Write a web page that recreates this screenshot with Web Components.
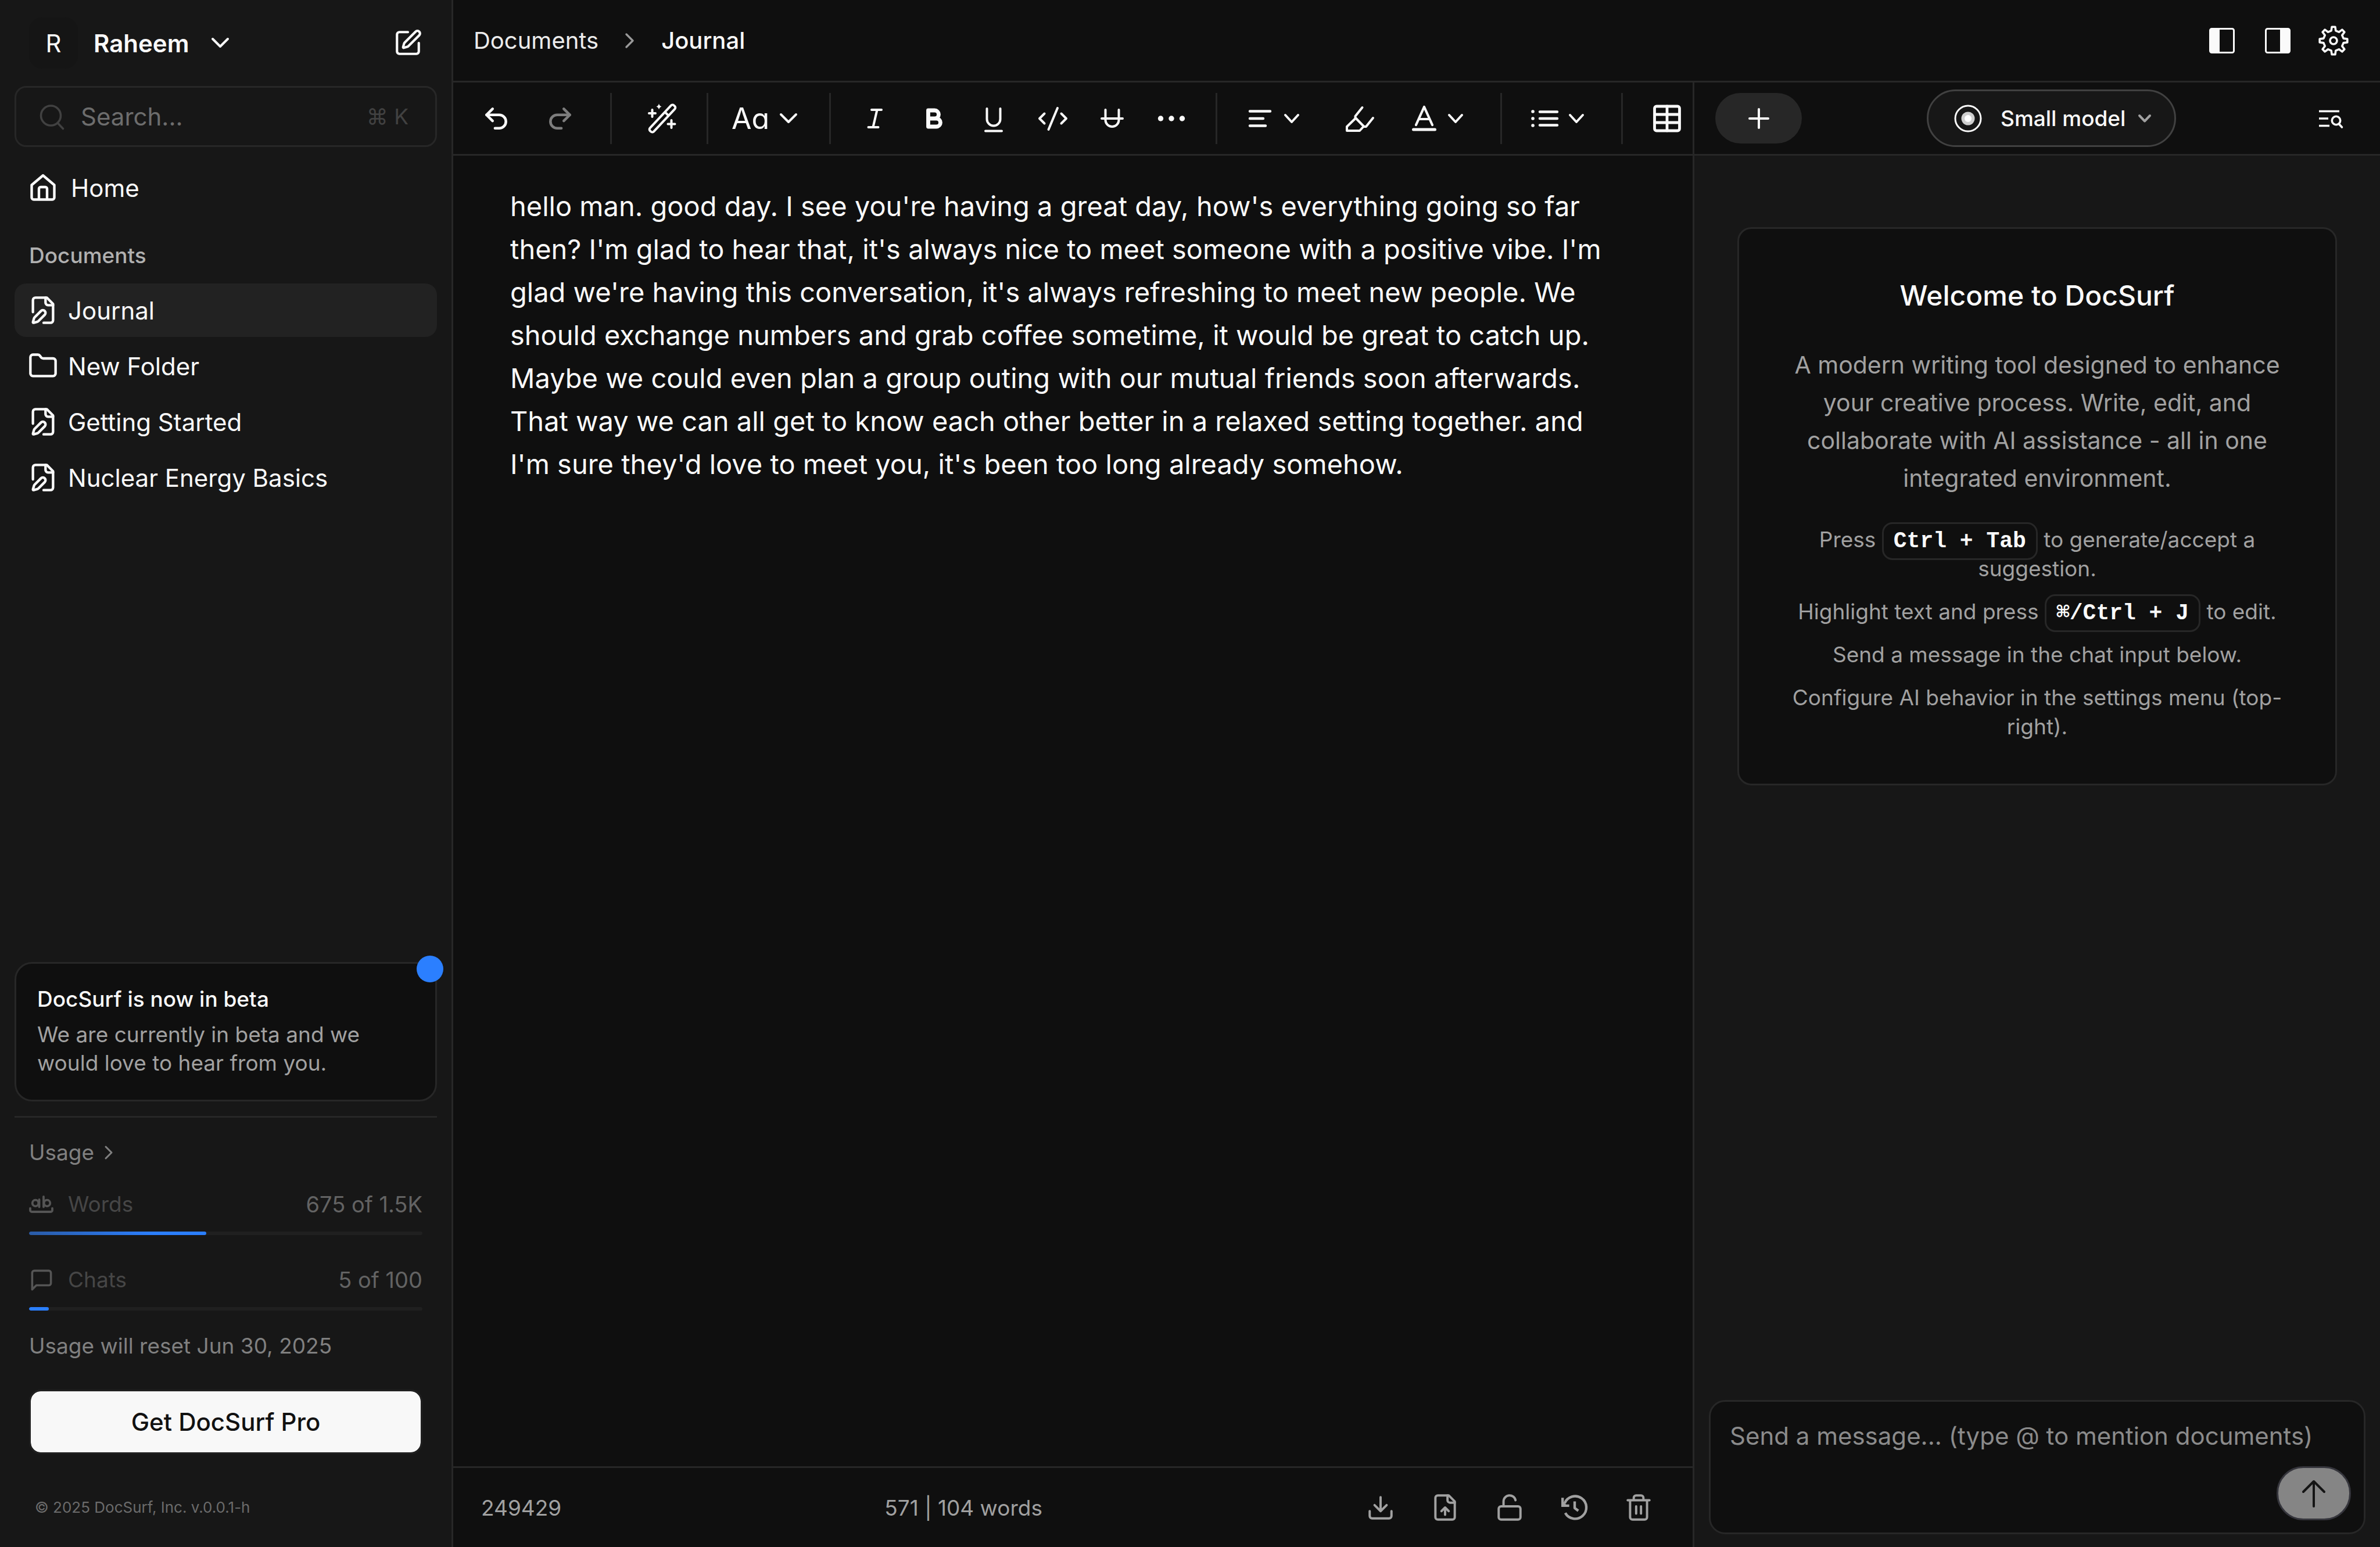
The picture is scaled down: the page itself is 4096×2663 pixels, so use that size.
<!DOCTYPE html>
<html lang="en">
<head>
<meta charset="utf-8">
<title>Journal - DocSurf</title>
<style>
  :root {
    --bg: #0f0f0f;
    --panel: #171717;
    --line: #272727;
    --text: #fafafa;
    --muted: #a1a1a1;
    --blue: #2b7fff;
  }
  html, body { height: 100%; }
  body {
    margin: 0;
    background: var(--bg);
    color: var(--text);
    font-family: Inter, "Liberation Sans", sans-serif;
    font-size: 42px;
  }
</style>
</head>
<body>
<ds-app></ds-app>

<script>
const BASE = `
  *, *::before, *::after { box-sizing: border-box; }
  button, input, textarea, select {
    font: inherit; color: inherit; background: none; border: 0; padding: 0; margin: 0; outline: none;
  }
  a { color: inherit; text-decoration: none; }
  p, h1, h2, ul, li { margin: 0; padding: 0; list-style: none; font-weight: inherit; font-size: inherit; }
`;

class Base extends HTMLElement {
  constructor() {
    super();
    this.attachShadow({ mode: 'open' });
  }
  connectedCallback() {
    this.shadowRoot.innerHTML = `<style>${BASE}${this.css()}</style>${this.html()}`;
  }
  css() { return ''; }
  html() { return ''; }
}

/* Outline of a cog with eight teeth */
function cog() {
  const pts = [];
  for (let i = 0; i < 8; i++) {
    const a = i * 45;
    for (const [d, r] of [[-13, 17.5], [-7, 24], [7, 24], [13, 17.5]]) {
      const t = (a + d - 90) * Math.PI / 180;
      pts.push((26 + r * Math.cos(t)).toFixed(1) + ' ' + (26 + r * Math.sin(t)).toFixed(1));
    }
  }
  return 'M' + pts.join('L') + 'Z';
}

/* name: [viewBox, width, height, stroke width, markup] */
const ICONS = {
  'chevron-down': ['0 0 32 20', 32, 20, 4, '<path d="M3 3l13 13 13-13"/>'],
  'chevron-small': ['0 0 28 18', 28, 18, 4, '<path d="M3 3l11 12 11-12"/>'],
  'chevron-tiny': ['0 0 24 14', 24, 14, 4, '<path d="M3 2l9 9.500 9-9.500"/>'],
  'chevron-right': ['0 0 16 26', 16, 26, 3.5, '<path d="M2 2l11 11-11 11"/>'],
  'chevron-next': ['0 0 14 24', 14, 24, 3, '<path d="M2 2l10 10-10 10"/>'],
  'compose': ['0 0 24 24', 50, 50, 2, '<path d="M12 3H5a2 2 0 0 0-2 2v14a2 2 0 0 0 2 2h14a2 2 0 0 0 2-2v-7"/><path d="M18.375 2.625a1 1 0 0 1 3 3l-9.013 9.014a2 2 0 0 1-.853.505l-2.873.84a.5.5 0 0 1-.62-.62l.84-2.873a2 2 0 0 1 .506-.852z"/>'],
  'search': ['0 0 44 44', 44, 44, 3.6, '<circle cx="19.500" cy="20" r="17"/><path d="M31.500 33l9 9.500"/>'],
  'home': ['0 0 44 48', 44, 48, 4.4, '<path d="M2.500 19.500L22 3l19.500 16.500V41a3.500 3.500 0 0 1-3.500 3.500H6A3.500 3.500 0 0 1 2.500 41z"/><path d="M15 44V26a3 3 0 0 1 3-3h8a3 3 0 0 1 3 3v18"/>'],
  'file-pen': ['0 0 24 24', 52, 52, 2, '<path d="M12.500 22H18a2 2 0 0 0 2-2V7l-5-5H6a2 2 0 0 0-2 2v9.500"/><path d="M14 2v4a2 2 0 0 0 2 2h4"/><path d="M13.378 15.626a1 1 0 1 0-3.004-3.004l-5.010 5.012a2 2 0 0 0-.506.854l-.837 2.870a.5.5 0 0 0 .620.620l2.870-.837a2 2 0 0 0 .854-.506z"/>'],
  'folder': ['0 0 24 24', 52, 52, 2, '<path d="M20 20a2 2 0 0 0 2-2V8a2 2 0 0 0-2-2h-7.900a2 2 0 0 1-1.690-.9L9.600 3.900A2 2 0 0 0 7.930 3H4a2 2 0 0 0-2 2v13a2 2 0 0 0 2 2Z"/>'],
  'words': ['0 0 42 30', 42, 30, 3.8, '<circle cx="11" cy="13" r="5.300"/><path d="M17.500 7v12.500"/><path d="M25 2v17.500"/><circle cx="31" cy="13" r="5.300"/><path d="M2 22v3.500a2.500 2.500 0 0 0 2.500 2.500h33a2.500 2.500 0 0 0 2.500-2.500V22"/>'],
  'chat': ['0 0 24 24', 43, 43, 2, '<path d="M21 15a2 2 0 0 1-2 2H7l-4 4V5a2 2 0 0 1 2-2h14a2 2 0 0 1 2 2z"/>'],
  'panel-left': ['0 0 44 44', 44, 44, 3, '<rect x="1.500" y="1.500" width="41" height="41" rx="3"/><path d="M3 1h15v42H3z" fill="currentColor" stroke="none"/>'],
  'panel-right': ['0 0 44 44', 44, 44, 3, '<rect x="1.500" y="1.500" width="41" height="41" rx="3"/><path d="M26 1h15v42H26z" fill="currentColor" stroke="none"/>'],
  'settings': ['0 0 52 52', 52, 52, 3.6, `<path d="${cog()}"/><circle cx="26" cy="26" r="6"/>`],
  'undo': ['0 0 24 24', 50, 50, 2.2, '<path d="M9 14 4 9l5-5"/><path d="M4 9h10.500a5.500 5.500 0 0 1 0 11H11"/>'],
  'redo': ['0 0 24 24', 50, 50, 2.2, '<path d="m15 14 5-5-5-5"/><path d="M20 9H9.500a5.500 5.500 0 0 0 0 11H13"/>'],
  'wand': ['0 0 52 52', 52, 52, 4, '<g transform="rotate(-47 27 26)"><rect x="-3" y="21.500" width="60" height="9" rx="3.500"/><path d="M38 22v8"/></g><path d="M21 .5q1 4 4.500 5-3.500 1-4.500 5-1-4-4.500-5 3.500-1 4.500-5z" fill="currentColor" stroke="none"/><path d="M9.500 11v12M4 17h11M42.500 29v13M36.500 35.500h12"/>'],
  'italic': ['0 0 52 52', 52, 52, 4, '<path d="M20 11h17M14.500 41h17M29.500 11L22.500 41"/>'],
  'bold': ['0 0 52 52', 52, 52, 6.8, '<path d="M15.500 12h11a7 7 0 0 1 0 14h-11zM15.500 26h14a7 7 0 0 1 0 14h-14z"/>'],
  'underline': ['0 0 52 52', 52, 52, 4, '<path d="M14.500 9v18a11.500 11.500 0 0 0 23 0V9M12 47.500h28"/>'],
  'code': ['0 0 52 52', 52, 52, 4, '<path d="M11.500 17.500L3 26l8.500 8.500M40.500 17.500L49 26l-8.500 8.500M34 8L18.500 45"/>'],
  'strike': ['0 0 52 52', 52, 52, 4, '<path d="M14.500 11v17.500a11.500 11.500 0 0 0 23 0V11M8 26h36"/>'],
  'more': ['0 0 52 52', 52, 52, 0, '<g fill="currentColor"><circle cx="7.500" cy="26" r="4.700"/><circle cx="26" cy="26" r="4.700"/><circle cx="44.500" cy="26" r="4.700"/></g>'],
  'align': ['0 0 52 52', 52, 52, 4.4, '<path d="M8 13.500h35M8 26h23M8 38.500h27"/>'],
  'highlight': ['0 0 52 52', 52, 52, 4, '<path d="M29.500 7L17.500 22v4L3 40v7h22l6.500-7h4.500L48 25M17.500 24.500L32.500 40"/>'],
  'colour': ['0 0 52 52', 52, 52, 4.2, '<path d="M12 37L26 6l14 31M16.500 27h19"/><path d="M7.500 45h37" stroke-width="5"/>'],
  'list': ['0 0 52 52', 52, 52, 4.4, '<path d="M17 14.500h30M17 26h30M17 37.500h30"/><path d="M5 14h.1M5 26h.1M5 38h.1" stroke-width="5.500"/>'],
  'table': ['0 0 52 52', 52, 52, 4.8, '<rect x="4.500" y="5" width="43" height="42" rx="3.500"/><path d="M26 5v42M5 19h42M5 33h42"/>'],
  'plus': ['0 0 36 36', 36, 36, 4, '<path d="M18 2v32M2 18h32"/>'],
  'model': ['0 0 48 48', 48, 48, 3, '<circle cx="24" cy="24" r="22"/><circle cx="24" cy="24" r="11.500" fill="#cfcfcf" stroke="none"/><circle cx="24" cy="24" r="6" fill="#ffffff" stroke="none"/>'],
  'list-search': ['0 0 52 52', 52, 52, 3.6, '<path d="M6 13.500h35M6 26h16M6 38.500h18" stroke-linecap="butt"/><circle cx="35.500" cy="29.500" r="7.200"/><path d="M40.500 35.500l5 5.500"/>'],
  'download': ['0 0 24 24', 50, 50, 1.9, '<path d="M3 15v4a2 2 0 0 0 2 2h14a2 2 0 0 0 2-2v-4"/><path d="m7 10 5 5 5-5M12 15V3.500"/>'],
  'file-up': ['0 0 24 24', 50, 50, 1.9, '<path d="M15 2H6a2 2 0 0 0-2 2v16a2 2 0 0 0 2 2h12a2 2 0 0 0 2-2V7Z"/><path d="M14 2v4a2 2 0 0 0 2 2h4M12 12v6M15 15l-3-3-3 3"/>'],
  'unlock': ['0 0 24 24', 50, 50, 1.9, '<rect x="3" y="11" width="18" height="11" rx="2"/><path d="M7 11V7a5 5 0 0 1 9.900-1"/>'],
  'history': ['0 0 24 24', 50, 50, 2.1, '<path d="M4.700 16.500a9.300 9.300 0 1 0-.5-8" stroke-linecap="butt"/><path d="M2.500 4v6.500H8" stroke-linecap="butt" stroke-linejoin="miter"/><path d="M2.500 10.500V6.500l3.800 4z" fill="currentColor" stroke="none"/><path d="M12.500 7v5.500l3 2.200" stroke-linecap="butt"/>'],
  'trash': ['0 0 24 24', 50, 50, 1.9, '<path d="M3 6h18M19 6v14a2 2 0 0 1-2 2H7a2 2 0 0 1-2-2V6M8 6V4a2 2 0 0 1 2-2h4a2 2 0 0 1 2 2v2M10 11v6M14 11v6"/>'],
  'arrow-up': ['0 0 52 52', 52, 52, 4, '<path d="M26 48V6M8 23L26 5l18 18"/>'],
};

customElements.define('ds-icon', class extends Base {
  css() {
    return `:host { display: inline-flex; flex: none; } svg { display: block; overflow: visible; }`;
  }
  html() {
    const [box, w, h, sw, body] = ICONS[this.getAttribute('name')];
    return `<svg viewBox="${box}" width="${w}" height="${h}" fill="none" stroke="currentColor" stroke-width="${sw}" stroke-linecap="round" stroke-linejoin="round" aria-hidden="true">${body}</svg>`;
  }
});

customElements.define('ds-icon-button', class extends Base {
  css() {
    return `:host { display: inline-flex; flex: none; }
      button { display: flex; align-items: center; justify-content: center; width: 52px; height: 88px; cursor: pointer; }
      :host([menu]) button { width: auto; gap: 14px; padding-right: 20px; }`;
  }
  html() {
    return `<button type="button" aria-label="${this.getAttribute('label')}"><ds-icon name="${this.getAttribute('icon')}"></ds-icon>${this.hasAttribute('menu') ? '<ds-icon name="chevron-small"></ds-icon>' : ''}</button>`;
  }
});

/* ---------- Sidebar ---------- */

customElements.define('ds-nav-item', class extends Base {
  css() {
    return `:host { display: block; }
      a { display: flex; align-items: center; gap: 17px; height: 92px; padding: 0 23px; border-radius: 20px; font-size: 42px; }
      :host([active]) a { background: #222222; }
      .icon { display: flex; width: 52px; justify-content: center; }
      :host([wide]) a { gap: 22px; }`;
  }
  html() {
    return `<a href="#"><span class="icon"><ds-icon name="${this.getAttribute('icon')}"></ds-icon></span><slot></slot></a>`;
  }
});

customElements.define('ds-meter', class extends Base {
  css() {
    return `:host { display: block; font-size: 37px; line-height: 48px; }
      .row { display: flex; align-items: center; margin-bottom: 23px; color: #464646; }
      .icon { display: flex; align-items: center; width: 67px; color: #555555; }
      .value { margin-left: auto; font-size: 38px; color: #636363; }
      progress { display: block; appearance: none; width: 100%; height: 6px; border: 0; border-radius: 3px; overflow: hidden; background: #202020; }
      progress::-webkit-progress-bar { background: #202020; border-radius: 3px; }
      progress::-webkit-progress-value { background: var(--blue); border-radius: 3px; }
      :host([fade]) progress::-webkit-progress-value { background: linear-gradient(90deg, #2a5ba6, #2b7fff 70%); }`;
  }
  html() {
    const a = n => this.getAttribute(n);
    return `<div class="row"><span class="icon"><ds-icon name="${a('icon')}"></ds-icon></span><label for="bar">${a('label')}</label><span class="value">${a('used')} of ${a('limit')}</span></div>
      <progress id="bar" max="${a('max')}" value="${a('used')}"></progress>`;
  }
});

customElements.define('ds-notice', class extends Base {
  css() {
    return `:host { display: block; position: relative; border: 3px solid var(--line); border-radius: 30px; background: var(--bg);
        padding: 36px 36px 39px; font-size: 37px; line-height: 49px; }
      h2 { font-weight: 500; margin-bottom: 12px; }
      p { color: var(--muted); }
      i { position: absolute; top: -14px; right: -14px; width: 46px; height: 46px; border-radius: 50%; background: var(--blue); }`;
  }
  html() {
    return `<h2><slot name="title"></slot></h2><p><slot></slot></p><i></i>`;
  }
});

customElements.define('ds-sidebar', class extends Base {
  css() {
    return `:host { display: flex; flex-direction: column; background: var(--panel); border-right: 3px solid var(--line); padding: 0 25px 50px; }
      header { display: flex; align-items: center; height: 148px; padding: 0 25px; }
      .user { display: flex; align-items: center; font-size: 42px; font-weight: 600; cursor: pointer; }
      .avatar { display: flex; align-items: center; justify-content: center; width: 84px; height: 88px; border-radius: 22px; background: #151515; font-size: 42px; font-weight: 400; margin-right: 27px; }
      .user ds-icon { margin-left: 37px; }
      .compose { display: flex; margin-left: auto; cursor: pointer; }
      .search { display: flex; align-items: center; height: 105px; border: 3px solid var(--line); border-radius: 20px; padding: 0 46px 0 40px; color: #414141; }
      .search input { flex: 1; min-width: 0; margin: 0 26px 0 27px; color: var(--text); font-size: 42px; appearance: none; }
      .search input::placeholder { color: #6d6d6d; opacity: 1; }
      kbd { font: inherit; font-size: 37px; }
      nav { display: flex; flex-direction: column; gap: 4px; }
      .home { margin-top: 24px; }
      h2 { font-size: 37px; line-height: 48px; font-weight: 500; color: #b0b0b0; padding: 47px 25px 24px; }
      .bottom { margin-top: auto; }
      hr { border: 0; height: 3px; background: var(--line); margin: 25px 0 36px; }
      .usage { padding: 0 25px; font-size: 37px; line-height: 48px; color: #808080; }
      .usage > a { display: inline-flex; align-items: center; gap: 18px; }
      .meters { display: flex; flex-direction: column; gap: 53px; margin: 41px 0 37px; }
      .pro { display: block; width: 100%; height: 111px; margin-top: 51px; border: 3px solid #202020; border-radius: 20px; background: #f8f8f8; background-clip: padding-box; color: #111111; font-size: 42px; font-weight: 500; cursor: pointer; }
      small { display: block; margin-top: 74px; padding: 0 35px; font-size: 26px; line-height: 36px; color: #6b6b6b; }`;
  }
  html() {
    return `
      <header>
        <button class="user" type="button"><span class="avatar">R</span>Raheem<ds-icon name="chevron-down"></ds-icon></button>
        <button class="compose" type="button" aria-label="New document"><ds-icon name="compose"></ds-icon></button>
      </header>
      <label class="search"><ds-icon name="search"></ds-icon><input type="search" placeholder="Search..." aria-label="Search"><kbd>⌘ K</kbd></label>
      <nav class="home"><ds-nav-item icon="home" wide>Home</ds-nav-item></nav>
      <h2>Documents</h2>
      <nav>
        <ds-nav-item icon="file-pen" active>Journal</ds-nav-item>
        <ds-nav-item icon="folder">New Folder</ds-nav-item>
        <ds-nav-item icon="file-pen">Getting Started</ds-nav-item>
        <ds-nav-item icon="file-pen">Nuclear Energy Basics</ds-nav-item>
      </nav>
      <div class="bottom">
        <ds-notice><span slot="title">DocSurf is now in beta</span>We are currently in beta and we would love to hear from you.</ds-notice>
        <hr>
        <div class="usage">
          <a href="#">Usage<ds-icon name="chevron-next"></ds-icon></a>
          <div class="meters">
            <ds-meter icon="words" label="Words" used="675" limit="1.5K" max="1500" fade></ds-meter>
            <ds-meter icon="chat" label="Chats" used="5" limit="100" max="100"></ds-meter>
          </div>
          <p>Usage will reset Jun 30, 2025</p>
          <button class="pro" type="button">Get DocSurf Pro</button>
        </div>
        <small>© 2025 DocSurf, Inc. v.0.0.1-h</small>
      </div>`;
  }
});

/* ---------- Top bar ---------- */

customElements.define('ds-topbar', class extends Base {
  css() {
    return `:host { display: flex; align-items: center; justify-content: space-between; height: 142px; padding: 0 54px 0 35px; border-bottom: 3px solid var(--line); font-size: 40px; }
      nav { display: flex; align-items: center; gap: 46px; }
      nav a { color: #ececec; }
      nav ds-icon { color: #999999; }
      strong { font-weight: 500; }
      .tools { display: flex; gap: 44px; }`;
  }
  html() {
    return `<nav aria-label="Breadcrumb"><a href="#">Documents</a><ds-icon name="chevron-right"></ds-icon><strong>Journal</strong></nav>
      <div class="tools">
        <ds-icon-button icon="panel-left" label="Toggle sidebar"></ds-icon-button>
        <ds-icon-button icon="panel-right" label="Toggle chat"></ds-icon-button>
        <ds-icon-button icon="settings" label="Settings"></ds-icon-button>
      </div>`;
  }
});

/* ---------- Editor ---------- */

customElements.define('ds-toolbar', class extends Base {
  css() {
    return `:host { display: flex; align-items: center; height: 126px; border-bottom: 3px solid var(--line); overflow: hidden; }
      .group { display: flex; align-items: center; flex: none; height: 88px; border-right: 3px solid var(--line); }
      .group:last-child { border-right: 0; }
      .history { gap: 58px; padding: 0 60px 0 48px; }
      .history :last-child { color: #7d7d7d; }
      .magic { padding: 0 51px 0 60px; }
      .type { padding: 0 54px 0 40px; }
      .type button { display: flex; align-items: center; gap: 17px; font-size: 50px; line-height: 64px; font-feature-settings: "cv11"; cursor: pointer; }
      .marks { gap: 50px; padding: 0 50px; }
      .para { gap: 58px; padding: 0 43px 0 48px; }
      .insert { padding-left: 50px; }`;
  }
  html() {
    const b = (icon, label, menu = '') => `<ds-icon-button icon="${icon}" label="${label}" ${menu}></ds-icon-button>`;
    return `
      <div class="group history">${b('undo', 'Undo')}${b('redo', 'Redo')}</div>
      <div class="group magic">${b('wand', 'AI edit')}</div>
      <div class="group type"><button type="button">Aa<ds-icon name="chevron-down"></ds-icon></button></div>
      <div class="group marks">${b('italic', 'Italic')}${b('bold', 'Bold')}${b('underline', 'Underline')}${b('code', 'Code')}${b('strike', 'Strikethrough')}${b('more', 'More')}</div>
      <div class="group para">${b('align', 'Align', 'menu')}${b('highlight', 'Highlight')}${b('colour', 'Text colour', 'menu')}</div>
      <div class="group para">${b('list', 'List', 'menu')}</div>
      <div class="group insert">${b('table', 'Table')}</div>`;
  }
});

customElements.define('ds-editor', class extends Base {
  css() {
    return `:host { display: flex; flex-direction: column; min-width: 0; background: var(--bg); }
      article { flex: 1; padding: 50px 132px 50px 98px; font-size: 47px; line-height: 74px; }
      footer { display: flex; align-items: center; justify-content: space-between; height: 139px; border-top: 3px solid var(--line); padding: 0 67px 0 48px; font-size: 37px; color: var(--muted); }
      .actions { display: flex; gap: 59px; }`;
  }
  html() {
    return `<ds-toolbar></ds-toolbar>
      <article><slot></slot></article>
      <footer><span>249429</span><span>571 | 104 words</span>
        <div class="actions">
          <ds-icon-button icon="download" label="Download"></ds-icon-button>
          <ds-icon-button icon="file-up" label="Import file"></ds-icon-button>
          <ds-icon-button icon="unlock" label="Lock document"></ds-icon-button>
          <ds-icon-button icon="history" label="History"></ds-icon-button>
          <ds-icon-button icon="trash" label="Delete"></ds-icon-button>
        </div>
      </footer>`;
  }
});

/* ---------- Chat ---------- */

customElements.define('ds-welcome', class extends Base {
  css() {
    return `:host { display: block; border: 3px solid var(--line); border-radius: 24px; background: var(--bg); padding: 86px 80px 73px; text-align: center; color: var(--muted); }
      h2 { font-size: 48px; line-height: 58px; font-weight: 500; color: var(--text); }
      p { margin-top: 58px; font-size: 41px; line-height: 65px; }
      ul { display: flex; flex-direction: column; gap: 24px; margin-top: 48px; font-size: 37px; line-height: 50px; }
      kbd { font: bold 38px/44px "Liberation Mono", monospace; color: var(--text); border: 3px solid var(--line); border-radius: 18px; padding: 8px 17px; }`;
  }
  html() {
    return `<h2>Welcome to DocSurf</h2>
      <p>A modern writing tool designed to enhance your creative process. Write, edit, and collaborate with AI assistance - all in one integrated environment.</p>
      <ul>
        <li>Press <kbd>Ctrl + Tab</kbd> to generate/accept a <span>suggestion.</span></li>
        <li>Highlight text and press <kbd>⌘/Ctrl + J</kbd> to edit.</li>
        <li>Send a message in the chat input below.</li>
        <li>Configure AI behavior in the settings menu (top-right).</li>
      </ul>`;
  }
});

customElements.define('ds-composer', class extends Base {
  css() {
    return `:host { display: flex; flex-direction: column; border: 3px solid var(--line); border-radius: 28px; background: var(--bg); padding: 33px 22px 21px 33px; }
      textarea { display: block; height: 52px; line-height: 52px; font-size: 42px; resize: none; overflow: hidden; }
      textarea::placeholder { color: #8b8b8b; opacity: 1; }
      button { display: flex; align-items: center; justify-content: center; align-self: flex-end; width: 128px; height: 93px; margin-top: 26px; border: 3px solid #35353c; border-radius: 46px; background: #858585; color: #141414; cursor: pointer; }`;
  }
  html() {
    return `<textarea rows="1" aria-label="Message" placeholder="Send a message... (type @ to mention documents)"></textarea>
      <button type="button" aria-label="Send"><ds-icon name="arrow-up"></ds-icon></button>`;
  }
});

customElements.define('ds-chat', class extends Base {
  css() {
    return `:host { display: flex; flex-direction: column; background: var(--panel); border-left: 3px solid var(--line); }
      header { display: flex; align-items: center; justify-content: space-between; height: 126px; padding: 0 34px 0 36px; background: var(--bg); border-bottom: 3px solid var(--line); }
      .new { display: flex; align-items: center; justify-content: center; width: 149px; height: 87px; border-radius: 44px; background: #272727; cursor: pointer; }
      .model { display: flex; align-items: center; height: 99px; padding: 0 39px 0 44px; border: 3px solid #414141; border-radius: 50px; background: var(--panel); font-size: 37px; font-weight: 500; }
      .model select { appearance: none; margin: 0 20px 0 32px; }
      .model ds-icon:last-child { color: var(--muted); }
      .find { display: flex; justify-content: center; width: 102px; cursor: pointer; }
      ds-welcome { margin: 123px 74px 0; }
      ds-composer { margin: auto 25px 22px; }`;
  }
  html() {
    return `<header>
        <button class="new" type="button" aria-label="New chat"><ds-icon name="plus"></ds-icon></button>
        <label class="model"><ds-icon name="model"></ds-icon><select aria-label="Model"><option>Small model</option></select><ds-icon name="chevron-tiny"></ds-icon></label>
        <button class="find" type="button" aria-label="Chat history"><ds-icon name="list-search"></ds-icon></button>
      </header>
      <ds-welcome></ds-welcome>
      <ds-composer></ds-composer>`;
  }
});

/* ---------- Shell ---------- */

customElements.define('ds-app', class extends Base {
  css() {
    return `:host { display: grid; grid-template-columns: 780px 1fr; height: 100vh; }
      main { display: flex; flex-direction: column; min-width: 0; }
      .work { flex: 1; min-height: 0; display: grid; grid-template-columns: minmax(0, 1fr) 1183px; }`;
  }
  html() {
    return `<ds-sidebar></ds-sidebar>
      <main>
        <ds-topbar></ds-topbar>
        <div class="work">
          <ds-editor><p>hello man. good day. I see you're having a great day, how's everything going so far then? I'm glad to hear that, it's always nice to meet someone with a positive vibe. I'm glad we're having this conversation, it's always refreshing to meet new people. We should exchange numbers and grab coffee sometime, it would be great to catch up. Maybe we could even plan a group outing with our mutual friends soon afterwards. That way we can all get to know each other better in a relaxed setting together. and I'm sure they'd love to meet you, it's been too long already somehow.</p></ds-editor>
          <ds-chat></ds-chat>
        </div>
      </main>`;
  }
});
</script>
</body>
</html>
